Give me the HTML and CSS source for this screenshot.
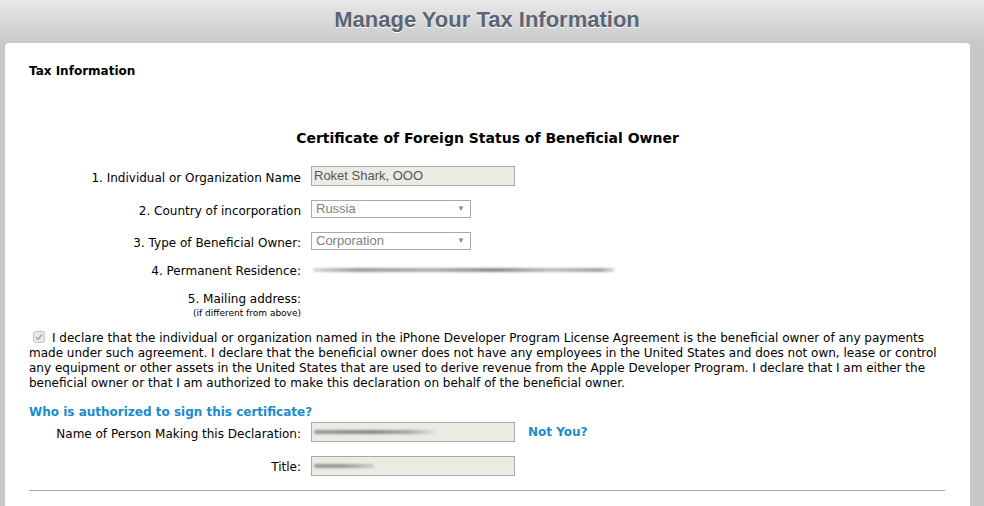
FILE: index.html
```html
<!DOCTYPE html>
<html>
<head>
<meta charset="utf-8">
<link rel="stylesheet" href="styles.css">
</head>
<body>
<div class="page">
  <header class="topbar"><h1 class="title">Manage Your Tax Information</h1></header>
  <main class="card">
    <h2 class="section">Tax Information</h2>
    <h3 class="cert">Certificate of Foreign Status of Beneficial Owner</h3>
    <div class="form">
      <div class="row r1">
        <div class="label">1. Individual or Organization Name</div>
        <div class="field"><div class="input">Roket Shark, OOO</div></div>
      </div>
      <div class="row r2">
        <div class="label">2. Country of incorporation</div>
        <div class="field"><div class="select"><span>Russia</span><span class="arrow">▼</span></div></div>
      </div>
      <div class="row r3">
        <div class="label">3. Type of Beneficial Owner:</div>
        <div class="field"><div class="select"><span>Corporation</span><span class="arrow">▼</span></div></div>
      </div>
      <div class="row r4">
        <div class="label">4. Permanent Residence:</div>
        <div class="field"><div class="blur blur-long"></div></div>
      </div>
      <div class="row r5">
        <div class="label">5. Mailing address:<div class="small">(if different from above)</div></div>
        <div class="field"></div>
      </div>
    </div>
    <p class="declare"><span class="check"><svg width="12" height="12" viewBox="0 0 12 12"><rect x="0.5" y="0.5" width="11" height="11" rx="2" fill="#e8e8e8" stroke="#c4c4c4"/><path d="M3 6.2 L5 8.3 L9 3.6" fill="none" stroke="#a8a8a8" stroke-width="1.6"/></svg></span>I declare that the individual or organization named in the iPhone Developer Program License Agreement is the beneficial owner of any payments made under such agreement. I declare that the beneficial owner does not have any employees in the United States and does not own, lease or control any equipment or other assets in the United States that are used to derive revenue from the Apple Developer Program. I declare that I am either the beneficial owner or that I am authorized to make this declaration on behalf of the beneficial owner.</p>
    <h4 class="who">Who is authorized to sign this certificate?</h4>
    <div class="form sign">
      <div class="row r6">
        <div class="label">Name of Person Making this Declaration:</div>
        <div class="field"><div class="input"><div class="blur blur-name"></div></div><a class="notyou">Not You?</a></div>
      </div>
      <div class="row r7">
        <div class="label">Title:</div>
        <div class="field"><div class="input"><div class="blur blur-title"></div></div></div>
      </div>
    </div>
    <hr class="rule">
  </main>
</div>
</body>
</html>
```
FILE: styles.css
```css
* { box-sizing: border-box; }
html, body { margin: 0; padding: 0; }
body {
  width: 984px;
  height: 506px;
  overflow: hidden;
  background: #c8c8c8;
  font-family: "DejaVu Sans", Verdana, sans-serif;
  font-size: 12px;
  color: #000;
}
.page { width: 970px; padding-left: 5px; }
.topbar {
  margin-left: -5px;
  width: 984px;
  height: 43px;
  background: linear-gradient(#e8e8e8, #c9c9c9);
  display: flex;
  justify-content: center;
}
.title {
  margin: 0 0 0 -10px;
  padding-top: 8px;
  font-family: "Liberation Sans Narrow", "Liberation Sans", Arial, sans-serif;
  font-stretch: condensed;
  font-weight: bold;
  font-size: 22px;
  line-height: 24px;
  color: #5b6472;
  text-shadow: 0 1px 0 #fff;
}
.card {
  width: 965px;
  height: 463px;
  background: #fff;
  border-radius: 4px 4px 0 0;
  padding: 21px 24px 0 24px;
}
.section { margin: 0; font-size: 12px; font-weight: bold; line-height: 14px; }
.cert {
  margin: 52px 0 0 0;
  text-align: center;
  font-size: 14px;
  line-height: 17px;
  font-weight: bold;
  padding-left: 0;
}
.form { margin-top: 19px; }
.row { display: flex; align-items: flex-start; }
.label { width: 272px; text-align: right; line-height: 14px; }
.field { margin-left: 10px; display: flex; align-items: flex-start; }
.input {
  width: 204px;
  height: 20px;
  background: #ebebe4;
  border: 1px solid #a9a9a9;
  font-family: "Liberation Sans", Arial, sans-serif;
  font-size: 13px;
  color: #555;
  padding: 1px 2px;
  line-height: 15px;
  overflow: hidden;
}
.select {
  width: 160px;
  height: 18px;
  border: 1px solid #a9a9a9;
  background: #fff;
  display: flex;
  justify-content: space-between;
  font-family: "Liberation Sans", Arial, sans-serif;
  font-size: 13px;
  line-height: 15px;
  color: #808080;
  padding: 0 0 0 4px;
}
.arrow { font-size: 8px; color: #888; padding-right: 5px; line-height: 16px; }
.r1 .label { padding-top: 5px; }
.r2 { margin-top: 14px; }
.r2 .label { padding-top: 4px; }
.r3 { margin-top: 14px; }
.r3 .label { padding-top: 4px; }
.r4 { margin-top: 14px; }
.r5 { margin-top: 14px; }
.small { font-size: 9px; line-height: 14px; }
.blur {
  height: 4px;
  border-radius: 2px;
  filter: blur(1.2px);
}
.blur-long {
  margin-top: 4px;
  margin-left: 2px;
  width: 302px;
  background: linear-gradient(90deg, #d8d8d8, #9a9a9a 15%, #b0b0b0 40%, #8a8a8a 60%, #c0c0c0 80%, #a0a0a0 95%, #e0e0e0);
}
.blur-name {
  margin-top: 6px;
  width: 120px;
  background: linear-gradient(90deg, #999, #888 50%, #aaa 80%, #ddd);
}
.blur-title {
  margin-top: 6px;
  width: 60px;
  background: linear-gradient(90deg, #999, #999 50%, #ccc);
}
.declare {
  margin: 11px 0 0 0;
  line-height: 15px;
  padding-right: 0;
  width: 918px;
}
.check { display: inline-block; vertical-align: -1px; margin: 0 7px 0 4px; }
.check svg { display: block; }
.who {
  margin: 14px 0 0 0;
  font-size: 12px;
  line-height: 15px;
  font-weight: bold;
  color: #1a8bcd;
}
.sign { margin-top: 2px; }
.r6 .label { padding-top: 5px; }
.notyou {
  margin-left: 13px;
  color: #1a8bcd;
  font-weight: bold;
  font-size: 12px;
  line-height: 14px;
  padding-top: 3px;
}
.r7 { margin-top: 14px; }
.r7 .label { padding-top: 4px; }
.rule {
  margin: 14px 0 0 0;
  border: 0;
  border-top: 1px solid #aaa;
  width: 916px;
}
```
